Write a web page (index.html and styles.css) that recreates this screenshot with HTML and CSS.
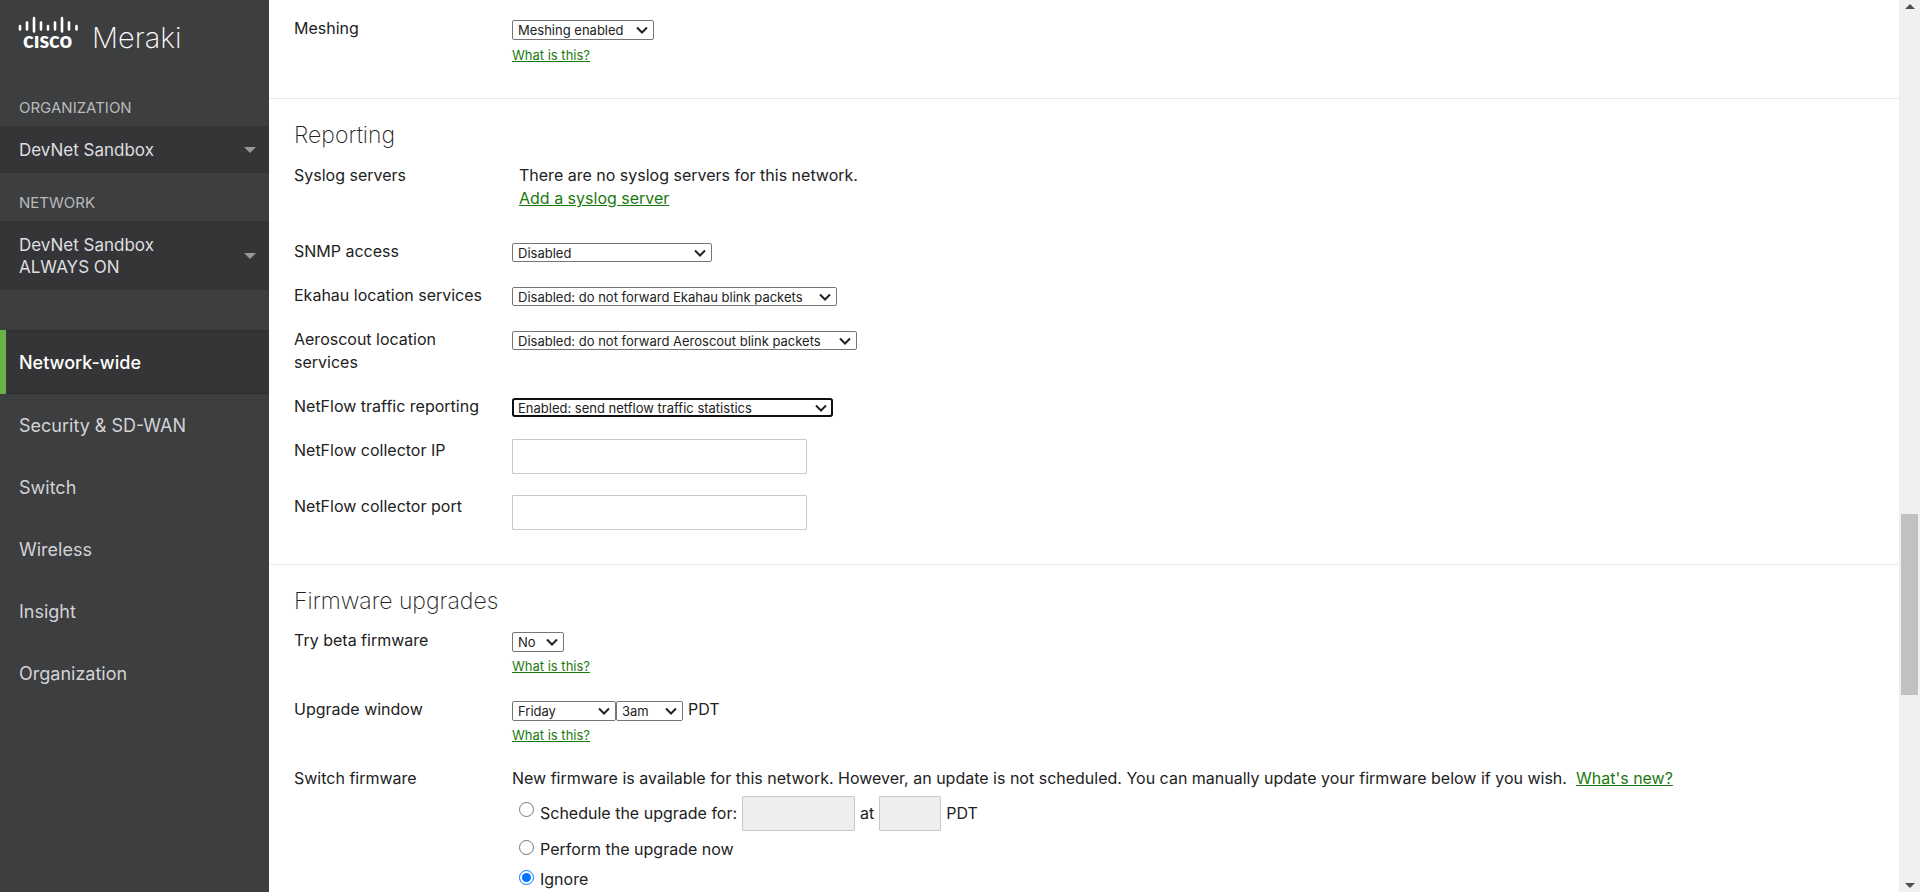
FILE: index.html
```html
<!DOCTYPE html>
<html lang="en">
<head>
<meta charset="utf-8">
<title>General - Meraki Dashboard</title>
<meta name="viewport" content="width=device-width, initial-scale=1">
<link rel="stylesheet" href="styles.css">
</head>
<body>
<div class="app">
  <aside class="sidebar">
    <svg class="logo" width="180" height="56" viewBox="0 0 180 56" role="img" aria-label="Cisco Meraki">
      <g class="logo-bars">
        <path d="M20 26v3.500M27 22.500v7M34 18v13.500M41 22.500v7M48 26v3.500M55 22.500v7M62 18v13.500M69 22.500v7M76.500 26v3.500"/>
      </g>
      <text class="logo-cisco" x="23" y="48">cısco</text>
      <text class="logo-meraki" x="92" y="48">Meraki</text>
    </svg>

    <h2 class="picker-title">ORGANIZATION</h2>
    <button class="picker" type="button"><span>DevNet Sandbox</span><i class="caret"></i></button>
    <h2 class="picker-title">NETWORK</h2>
    <button class="picker picker-tall" type="button"><span>DevNet Sandbox<br>ALWAYS ON</span><i class="caret"></i></button>

    <nav class="nav">
      <a class="nav-item active" href="#network">Network-wide</a>
      <a class="nav-item" href="#security">Security &amp; SD-WAN</a>
      <a class="nav-item" href="#switch">Switch</a>
      <a class="nav-item" href="#wireless">Wireless</a>
      <a class="nav-item" href="#insight">Insight</a>
      <a class="nav-item" href="#organization">Organization</a>
    </nav>
  </aside>

  <main class="content">
    <section class="section section-first">
      <div class="row">
        <label class="label" for="mesh">Meshing</label>
        <div class="field">
          <div class="line"><select id="mesh" class="select w-mesh"><option>Meshing enabled</option></select></div>
          <a class="help" href="#help">What is this?</a>
        </div>
      </div>
    </section>

    <section class="section">
      <h1 class="heading">Reporting</h1>
      <div class="row row-syslog">
        <div class="label">Syslog servers</div>
        <div class="field indent">There are no syslog servers for this network.<br><a class="link" href="#syslog">Add a syslog server</a></div>
      </div>
      <div class="row">
        <label class="label" for="snmp">SNMP access</label>
        <select id="snmp" class="select w-snmp"><option>Disabled</option></select>
      </div>
      <div class="row">
        <label class="label" for="ekahau">Ekahau location services</label>
        <select id="ekahau" class="select w-ekahau"><option>Disabled: do not forward Ekahau blink packets</option></select>
      </div>
      <div class="row">
        <label class="label" for="aero">Aeroscout location services</label>
        <select id="aero" class="select w-aero"><option>Disabled: do not forward Aeroscout blink packets</option></select>
      </div>
      <div class="row">
        <label class="label" for="netflow">NetFlow traffic reporting</label>
        <select id="netflow" class="select w-netflow focused"><option>Enabled: send netflow traffic statistics</option></select>
      </div>
      <div class="row">
        <label class="label" for="ip">NetFlow collector IP</label>
        <input id="ip" class="input" type="text">
      </div>
      <div class="row">
        <label class="label" for="port">NetFlow collector port</label>
        <input id="port" class="input" type="text">
      </div>
    </section>

    <section class="section">
      <h1 class="heading">Firmware upgrades</h1>
      <div class="row">
        <label class="label" for="beta">Try beta firmware</label>
        <div class="field">
          <div class="line"><select id="beta" class="select w-beta"><option>No</option></select></div>
          <a class="help" href="#help">What is this?</a>
        </div>
      </div>
      <div class="row">
        <label class="label" for="day">Upgrade window</label>
        <div class="field">
          <div class="line"><select id="day" class="select w-day"><option>Friday</option></select><select class="select w-hour" aria-label="Hour"><option>3am</option></select><span class="zone">PDT</span></div>
          <a class="help" href="#help">What is this?</a>
        </div>
      </div>
      <div class="row">
        <div class="label">Switch firmware</div>
        <div class="field">
          <div class="notice">New firmware is available for this network. However, an update is not scheduled. You can manually update your firmware below if you wish. &nbsp;<a class="link" href="#new">What's new?</a></div>
          <div class="choices">
            <div class="choice choice-tall">
              <input id="later" class="radio" type="radio" name="upgrade"><label for="later">Schedule the upgrade for:</label>
              <input class="input input-date" type="text" aria-label="Date" disabled><span>at</span><input class="input input-time" type="text" aria-label="Time" disabled><span>PDT</span>
            </div>
            <div class="choice"><input id="now" class="radio" type="radio" name="upgrade"><label for="now">Perform the upgrade now</label></div>
            <div class="choice"><input id="ignore" class="radio" type="radio" name="upgrade" checked><label for="ignore">Ignore</label></div>
          </div>
        </div>
      </div>
    </section>
  </main>

  <div class="scrollbar" aria-hidden="true">
    <i class="arrow arrow-up"></i>
    <div class="track"><div class="thumb"></div></div>
    <i class="arrow arrow-down"></i>
  </div>
</div>
</body>
</html>
```
FILE: styles.css
```css
* { box-sizing: border-box; }
body {
  margin: 0;
  background: #fff;
  color: #222;
  font: 16px/23px Inter, "Liberation Sans", sans-serif;
}
.app { display: flex; height: 100vh; overflow: hidden; }

.sidebar {
  flex: 0 0 269px;
  background: #3d3e40;
  color: #d2d3d5;
}
.logo { display: block; }
.logo-bars { stroke: #fff; stroke-width: 2.6; stroke-linecap: round; fill: none; }
.logo-cisco { font: 900 22px Lato, sans-serif; fill: #fff; }
.logo-meraki { font: 200 29px Inter, sans-serif; fill: #fff; }

.picker-title {
  margin: 0;
  padding: 20px 19px 8px;
  font-size: 15px;
  font-weight: 400;
  line-height: 20px;
  color: #b9babc;
}
.logo + .picker-title { padding-top: 42px; }
.picker {
  display: flex;
  align-items: center;
  justify-content: space-between;
  width: 100%;
  min-height: 47px;
  padding: 0 13px 0 19px;
  border: 0;
  background: #353537;
  color: #dedfe1;
  font: 17px/22px Inter, sans-serif;
  text-align: left;
}
.picker-tall { min-height: 69px; }
.caret {
  border: 6px solid transparent;
  border-top-color: #97989a;
  border-bottom: 0;
}
.nav { margin-top: 40px; }
.nav-item {
  display: flex;
  align-items: center;
  height: 62px;
  padding: 0 19px;
  font-size: 18px;
  color: inherit;
  text-decoration: none;
}
.nav-item.active {
  height: 64px;
  padding-left: 13px;
  border-left: 6px solid #67b346;
  background: #353537;
  box-shadow: inset 0 1px #2d2d2f, inset 0 -1px #2d2d2f;
  color: #fff;
  font-weight: 500;
}

.content { flex: 1; min-width: 0; overflow: hidden; }
.section {
  display: flex;
  flex-direction: column;
  gap: 21px;
  padding: 20px 25px 34px;
  border-top: 1px solid #e8e8e8;
}
.section-first { padding-top: 17px; padding-bottom: 31px; border-top: 0; }
.heading {
  margin: 0 0 -9px;
  font-size: 23px;
  font-weight: 200;
  line-height: 32px;
}
.row { display: flex; align-items: flex-start; }
.row-syslog { min-height: 56px; padding-top: 1px; }
.label { flex: 0 0 218px; padding-right: 24px; }
.field { flex: 1; min-width: 0; }
.indent { padding-left: 7px; }
.line { display: flex; align-items: flex-start; height: 27px; }
.link, .help { color: #1b7a0e; text-decoration: underline; }
.help { display: block; width: fit-content; font-size: 13px; line-height: 21px; }
.section-first .help { line-height: 23px; }
.zone { margin-left: 5px; }

.select {
  height: 19px;
  margin: 3px 0 0;
  padding: 0 20px 0 5px;
  border: 1px solid #767676;
  border-radius: 2px;
  appearance: none;
  background: #fff url("data:image/svg+xml,%3Csvg xmlns='http://www.w3.org/2000/svg' width='12' height='8'%3E%3Cpath d='M1 1.500l5 5 5-5' fill='none' stroke='%23222' stroke-width='2'/%3E%3C/svg%3E") no-repeat right 5px center;
  color: #222;
  font: 13px Inter, sans-serif;
}
.line .select { height: 20px; }
.select.focused { outline: 2px solid #101010; outline-offset: -2px; border-radius: 3px; }
.w-mesh { width: 142px; }
.w-snmp { width: 200px; }
.w-ekahau { width: 325px; }
.w-aero { width: 345px; }
.w-netflow { width: 321px; }
.w-beta { width: 52px; }
.w-day { width: 104px; }
.w-hour { width: 67px; }

.input {
  width: 295px;
  height: 35px;
  padding: 0 8px;
  border: 1px solid #c8c8c8;
  border-radius: 1px;
  background: #fff;
  font: inherit;
}
.input:disabled { background: #eee; }
.input-date { width: 113px; margin: 0 5px; }
.input-time { width: 62px; margin: 0 5px; }

.choices { display: flex; flex-direction: column; gap: 7px; padding: 6px 0 0 7px; }
.choice { display: flex; align-items: center; }
.radio { width: 15px; height: 15px; margin: 0 6px 5px 0; accent-color: #0075ff; }
.choice-tall .radio { margin-bottom: 8px; }

.scrollbar {
  display: flex;
  flex: 0 0 21px;
  flex-direction: column;
  align-items: center;
  justify-content: space-between;
  padding: 4px 2px;
  background: #f0f0f0;
}
.track { display: flex; flex: 1; flex-direction: column; width: 17px; }
.track::before { content: ""; flex: 505; }
.track::after { content: ""; flex: 188; }
.thumb { flex: 181; background: #c1c1c1; }
.arrow { border: 5px solid transparent; }
.arrow-up { border-top: 0; border-bottom-color: #505050; }
.arrow-down { border-bottom: 0; border-top-color: #505050; }
```
